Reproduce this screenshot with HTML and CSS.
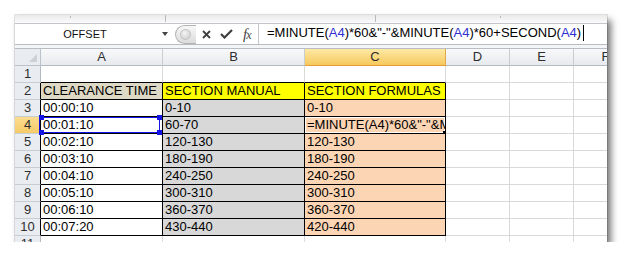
FILE: index.html
```html
<!DOCTYPE html>
<html lang="en">
<head>
    <meta charset="UTF-8">
    <title>OFFSET - section formulas</title>
    <link rel="stylesheet" href="styles.css">
</head>
<body>
    <div class="window">
        <div class="ribbon-edge">
            <span class="tick t1"></span>
            <span class="tick t2"></span>
            <span class="tick t3"></span>
            <span class="tick t4"></span>
        </div>

        <div class="formula-bar">
            <div class="name-box">
                <span class="name-text">OFFSET</span>
                <span class="name-arrow"></span>
            </div>
            <div class="fx-controls">
                <span class="grip"><span class="grip-dot"></span></span>
                <svg class="btn-cancel" width="9" height="9" viewBox="0 0 9 9">
                    <path d="M1 1 L8 8 M8 1 L1 8" stroke="#3f3f3f" stroke-width="1.8" fill="none"/>
                </svg>
                <svg class="btn-enter" width="13" height="10" viewBox="0 0 13 10">
                    <path d="M1 5 L4.5 8.5 L12 1" stroke="#3f3f3f" stroke-width="2.2" fill="none"/>
                </svg>
                <span class="btn-fx">f<span class="fx-x">x</span></span>
            </div>
            <div class="formula">=MINUTE(<span class="ref">A4</span>)*60&amp;"-"&amp;MINUTE(<span class="ref">A4</span>)*60+SECOND(<span class="ref">A4</span>)<span class="caret"></span></div>
        </div>
        <div class="gap-band"></div>

        <div class="sheet">
            <div class="corner"><span class="corner-tri"></span></div>
            <div class="ch">A</div>
            <div class="ch">B</div>
            <div class="ch sel">C</div>
            <div class="ch">D</div>
            <div class="ch">E</div>
            <div class="ch">F</div>

            <div class="rh">1</div>
            <div class="c top-edge"></div>
            <div class="c top-edge"></div>
            <div class="c top-edge"></div>
            <div class="c"></div><div class="c"></div><div class="c"></div>

            <div class="rh edge">2</div>
            <div class="c box tan">CLEARANCE TIME</div>
            <div class="c box yellow">SECTION MANUAL</div>
            <div class="c box yellow">SECTION FORMULAS</div>
            <div class="c"></div><div class="c"></div><div class="c"></div>

            <div class="rh edge">3</div>
            <div class="c box">00:00:10</div>
            <div class="c box grey">0-10</div>
            <div class="c box peach">0-10</div>
            <div class="c"></div><div class="c"></div><div class="c"></div>

            <div class="rh edge sel">4</div>
            <div class="c box selected">00:01:10
                <span class="sel-box">
                    <span class="handle h-tl"></span>
                    <span class="handle h-tr"></span>
                    <span class="handle h-bl"></span>
                    <span class="handle h-br"></span>
                </span>
            </div>
            <div class="c box grey">60-70</div>
            <div class="c box peach editing">=MINUTE(A4)*60&amp;"-"&amp;MINUTE(A4)*60+SECOND(A4)<span class="fill-handle"></span></div>
            <div class="c"></div><div class="c"></div><div class="c"></div>

            <div class="rh edge">5</div>
            <div class="c box">00:02:10</div>
            <div class="c box grey">120-130</div>
            <div class="c box peach">120-130</div>
            <div class="c"></div><div class="c"></div><div class="c"></div>

            <div class="rh edge">6</div>
            <div class="c box">00:03:10</div>
            <div class="c box grey">180-190</div>
            <div class="c box peach">180-190</div>
            <div class="c"></div><div class="c"></div><div class="c"></div>

            <div class="rh edge">7</div>
            <div class="c box">00:04:10</div>
            <div class="c box grey">240-250</div>
            <div class="c box peach">240-250</div>
            <div class="c"></div><div class="c"></div><div class="c"></div>

            <div class="rh edge">8</div>
            <div class="c box">00:05:10</div>
            <div class="c box grey">300-310</div>
            <div class="c box peach">300-310</div>
            <div class="c"></div><div class="c"></div><div class="c"></div>

            <div class="rh edge">9</div>
            <div class="c box">00:06:10</div>
            <div class="c box grey">360-370</div>
            <div class="c box peach">360-370</div>
            <div class="c"></div><div class="c"></div><div class="c"></div>

            <div class="rh edge">10</div>
            <div class="c box">00:07:20</div>
            <div class="c box grey">430-440</div>
            <div class="c box peach">420-440</div>
            <div class="c"></div><div class="c"></div><div class="c"></div>

            <div class="rh">11</div>
            <div class="c"></div><div class="c"></div><div class="c"></div>
            <div class="c"></div><div class="c"></div><div class="c"></div>
        </div>
    </div>
</body>
</html>
```

FILE: styles.css
```css
body {
    margin: 0;
    background: #fff;
    font-family: "Liberation Sans", Arial, sans-serif;
}

.window {
    width: 592px;
    height: 227px;
    margin: 15px 0 0 15px;
    background: #fff;
    overflow: hidden;
    box-shadow: 0 0 0 1px rgba(0, 0, 0, 0.1), 4px 5px 7px rgba(0, 0, 0, 0.55);
}

/* bottom edge of the ribbon */
.ribbon-edge {
    display: flex;
    align-items: flex-start;
    height: 8px;
    border-bottom: 1px solid #c3c6cb;
    background: linear-gradient(#e9e9e9, #fbfbfb);
}

.tick {
    width: 1px;
    height: 7px;
    background: #b9b9b9;
}

.tick.t1 { margin-left: 55px; height: 2px; margin-top: 1px; }
.tick.t2 { margin-left: 94px; }
.tick.t3 { margin-left: 209px; }
.tick.t4 { margin-left: 124px; height: 2px; margin-top: 1px; }

/* formula bar */
.formula-bar {
    display: flex;
    height: 20px;
    border-bottom: 1px solid #b9bdc3;
    background: #fff;
}

.name-box {
    width: 160px;
    display: flex;
    align-items: center;
}

.name-text {
    width: 140px;
    text-align: center;
    font-size: 11px;
    color: #111;
}

.name-arrow {
    margin-left: 7px;
    width: 0;
    height: 0;
    border-left: 3px solid transparent;
    border-right: 3px solid transparent;
    border-top: 4px solid #444;
}

.fx-controls {
    width: 83px;
    display: flex;
    align-items: center;
    border-right: 1px solid #c3c6cb;
}

.grip {
    width: 21px;
    height: 19px;
    box-sizing: border-box;
    border: 1px solid #b3b3b3;
    border-right: none;
    border-radius: 10px 0 0 10px;
    background: linear-gradient(#f7f7f7, #dcdcdc);
    display: flex;
    align-items: center;
}

.grip-dot {
    width: 9px;
    height: 9px;
    margin-left: 4px;
    border-radius: 50%;
    background: radial-gradient(circle at 40% 35%, #f4f4f4, #c9c9c9);
    border: 1px solid #c2c2c2;
}

.btn-cancel {
    margin-left: 6px;
}

.btn-enter {
    margin-left: 9px;
}

.btn-fx {
    margin-left: 10px;
    font-family: "Liberation Serif", "Times New Roman", serif;
    font-style: italic;
    font-size: 15px;
    color: #444;
    line-height: 18px;
}

.fx-x {
    font-size: 12px;
    margin-left: -1px;
}

.formula {
    flex: 1;
    padding-left: 8px;
    font-size: 13px;
    line-height: 18px;
    color: #000;
    white-space: nowrap;
}

.ref {
    color: #2f2fd0;
}

.caret {
    display: inline-block;
    width: 1px;
    height: 16px;
    margin-left: 2px;
    background: #000;
    vertical-align: -4px;
}

.gap-band {
    height: 3px;
    border-bottom: 1px solid #b9bdc3;
    background: #f4f5f6;
}

/* worksheet grid */
.sheet {
    display: grid;
    grid-template-columns: 26px 122px 142px 141px 64px 64px 64px;
    grid-auto-rows: 17px;
    font-size: 13px;
    line-height: 16px;
}

.sheet > div {
    box-sizing: border-box;
    border-right: 1px solid #d9d9d9;
    border-bottom: 1px solid #d9d9d9;
    white-space: nowrap;
    overflow: hidden;
}

.corner,
.ch,
.rh {
    color: #2e2e2e;
    text-align: center;
}

.sheet > .corner {
    position: relative;
    background: #e9ecf0;
    border-color: #bcc2ca;
}

.corner-tri {
    position: absolute;
    right: 3px;
    bottom: 3px;
    width: 0;
    height: 0;
    border-left: 8px solid transparent;
    border-bottom: 8px solid #cdd1d6;
}

.sheet > .ch {
    background: linear-gradient(#f8f9fa, #e7eaee);
    border-right-color: #c8cdd3;
    border-bottom-color: #b4bac2;
}

.sheet > .rh {
    background: #e9ecf0;
    border-right-color: #b4bac2;
    border-bottom-color: #c8cdd3;
}

.sheet > .ch.sel {
    background: linear-gradient(#fde9a5, #f7c95e);
    border-right-color: #e5a846;
    border-bottom-color: #e59a33;
}

.sheet > .rh.sel {
    background: linear-gradient(#fbdd8f, #f6cb68);
}

.c {
    padding-left: 2px;
    color: #000;
}

.sheet > .top-edge {
    border-bottom-color: #000;
}

.sheet > .rh.edge {
    border-right-color: #000;
}

.sheet > .box {
    border-color: #000;
}

.tan { background: #ddd9c4; }
.yellow { background: #ffff00; }
.grey { background: #d8d8d8; }
.peach { background: #fcd5b4; }

.selected {
    position: relative;
    overflow: visible !important;
}

.sel-box {
    position: absolute;
    top: 0;
    left: -2px;
    width: 121px;
    height: 16px;
    box-sizing: border-box;
    border: 1px solid #1414e6;
}

.handle {
    position: absolute;
    width: 5px;
    height: 5px;
    background: #1414e6;
}

.h-tl { left: -1px; top: -3px; }
.h-tr { right: -3px; top: -3px; }
.h-bl { left: -1px; bottom: -3px; }
.h-br { right: -3px; bottom: -3px; }

.editing {
    position: relative;
    box-shadow: inset 0 0 0 1px #fff;
}

.fill-handle {
    position: absolute;
    right: -1px;
    bottom: -1px;
    width: 3px;
    height: 3px;
    background: #000;
}
```
